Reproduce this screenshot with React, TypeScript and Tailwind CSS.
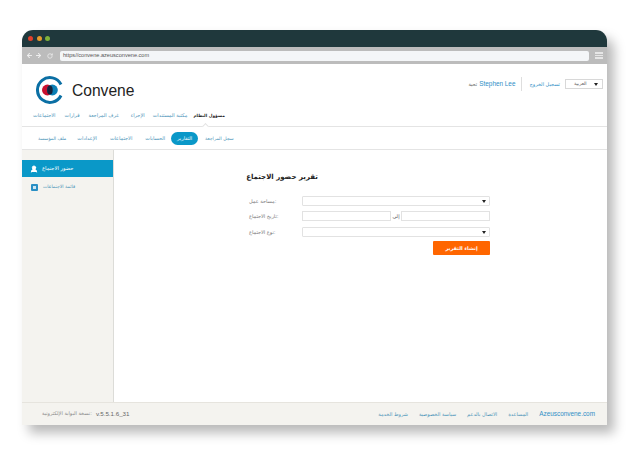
import { ArrowLeft, ArrowRight, RotateCw, UserRound } from 'lucide-react';

const font = { arabic: "font-['DejaVu_Sans','Noto_Sans',sans-serif]" };

const mainNav = [
  { label: 'الاجتماعات', className: 'mr-[9px]' },
  { label: 'قرارات', className: 'mr-[9px]' },
  { label: 'غرف المراجعة', className: 'mr-[12px]' },
  { label: 'الإجراء', className: 'mr-[8px]' },
  { label: 'مكتبة المستندات', className: 'mr-[6px]' },
];
const subNav = [
  { label: 'ملف المؤسسة', className: 'text-[4.6px] mt-[2px] mr-[11px]' },
  { label: 'الإعدادات', className: 'mr-[13px]' },
  { label: 'الاجتماعات', className: 'mr-[13px]' },
  { label: 'الحسابات', className: 'mr-[6px]' },
];
const footerLinks = ['شروط الخدمة', 'سياسة الخصوصية', 'الاتصال بالدعم', 'المساعدة'];

function Logo() {
  return (
    <svg width="28" height="28" viewBox="0 0 28 28" className="shrink-0">
      <path d="M25 8.5 A12.4 12.4 0 1 0 25 19.5" fill="none" stroke="#0b6fa4" strokeWidth="3" />
      <circle cx="11.4" cy="14" r="5.4" fill="#c8102e" />
      <circle cx="16.4" cy="14" r="5.4" fill="#0b7fb5" />
      <ellipse cx="13.9" cy="14" rx="2.8" ry="4.6" fill="#14233c" />
    </svg>
  );
}

function Caret() {
  return <span className="w-0 h-0 border-x-[2px] border-x-transparent border-t-[3px] border-t-[#222]" />;
}

function SelectBox() {
  return (
    <div className="h-[10px] w-full flex items-center justify-end pr-[3px] bg-white border border-[#e2e2e2] rounded-[1px]">
      <Caret />
    </div>
  );
}

function FormLabel({ text }: { text: string }) {
  return (
    <div className="w-[54px] text-[5px] leading-none text-[#777] shrink-0 pl-[1px]">
      <span dir="rtl" className="inline-block">{text}</span>
    </div>
  );
}

export default function App() {
  return (
    <div className={`w-[630px] h-[470px] bg-white pt-[30px] pl-[22px] overflow-hidden ${font.arabic}`}>
      <div className="w-[585px] h-[395px] flex flex-col bg-white rounded-t-[11px] shadow-[7px_8px_12px_rgba(0,0,0,0.28)]">
        {/* Browser chrome */}
        <div className="h-[17px] bg-[#1f383c] rounded-t-[11px] flex items-center gap-[3.5px] pl-[6px] shrink-0">
          <span className="w-[5px] h-[5px] rounded-full bg-[#e0402c]" />
          <span className="w-[5px] h-[5px] rounded-full bg-[#e59a2c]" />
          <span className="w-[5px] h-[5px] rounded-full bg-[#7fb23a]" />
        </div>
        <div className="h-[17px] bg-[#bcbcbc] flex items-center pl-[4px] pr-[4px] shrink-0">
          <div className="flex items-center gap-[2px] w-[34px] text-[#eeeeee]">
            <ArrowLeft size={7} strokeWidth={3.5} />
            <ArrowRight size={7} strokeWidth={3.5} />
            <RotateCw size={6} strokeWidth={3} className="ml-[3px]" />
          </div>
          <div className="w-[529px] h-[10px] bg-[#f4f6f8] rounded-[2px] flex items-center pl-[3px] text-[5.6px] leading-none text-[#555] font-['Liberation_Sans',sans-serif]">
            https//convene.azeusconvene.com
          </div>
          <div className="ml-[6px] w-[8px] flex flex-col gap-[1px]">
            <span className="h-[1.5px] bg-[#e6e6e6]" />
            <span className="h-[1.5px] bg-[#e6e6e6]" />
            <span className="h-[1.5px] bg-[#e6e6e6]" />
          </div>
        </div>

        {/* Header */}
        <header className="relative h-[63px] border-b border-[#e4e4e4] px-[11px] shrink-0">
          <div className="flex justify-between pt-[12px]">
            <div className="flex items-center gap-[8px] pl-[3px]">
              <Logo />
              <span className="text-[15.6px] leading-none text-[#222] mt-[2px] font-['Liberation_Sans',sans-serif]">Convene</span>
            </div>
            <div className="flex items-center h-[14px] mt-[1px] text-[5px] leading-none -mr-[7px]">
              <span className="text-[#666] mr-[2px]">تحية</span>
              <span className="text-[#2f8fc6] text-[6.4px] font-['Liberation_Sans',sans-serif]">Stephen Lee</span>
              <span className="w-px h-[14px] bg-[#dedede] ml-[6px] mr-[7px]" />
              <span className="text-[#2f8fc6] mr-[5px]">تسجيل الخروج</span>
              <div className="w-[38px] h-[10px] border border-[#d8d8d8] flex items-center justify-between pl-[8px] pr-[4px]">
                <span className="text-[#555] text-[4.6px]">العربية</span>
                <Caret />
              </div>
            </div>
          </div>
          <nav className="flex items-center mt-[8px] text-[5px] leading-none text-[#4a93b8]">
            {mainNav.map((item) => (
              <span key={item.label} dir="rtl" className={item.className}>{item.label}</span>
            ))}
            <span dir="rtl" className="text-[4.3px] mt-[2px] text-[#222] font-bold">مسؤول النظام</span>
          </nav>
          <span className="absolute left-[181px] -bottom-[3px] w-[5px] h-[5px] rotate-45 bg-white border-l border-t border-[#e4e4e4]" />
        </header>

        <nav className="h-[23px] border-b border-[#e4e4e4] flex items-center pl-[16px] text-[5px] leading-none text-[#4a93b8] shrink-0">
          {subNav.map((item) => (
            <span key={item.label} dir="rtl" className={item.className}>{item.label}</span>
          ))}
          <span dir="rtl" className="w-[27px] h-[13px] rounded-full bg-[#0a98c8] text-white flex items-center justify-center">التقارير</span>
          <span dir="rtl" className="ml-[7px] mt-[2px] text-[4.6px]">سجل المراجعة</span>
        </nav>

        {/* Body */}
        <div className="flex flex-1 min-h-0">
          <aside className="w-[92px] bg-[#f4f3ef] border-r border-[#dcdcd8] pt-[10px] shrink-0">
            <div className="h-[17px] bg-[#0a98c8] flex items-center pl-[8px] gap-[4px] text-white text-[5.2px] leading-none">
              <UserRound size={8} strokeWidth={3} fill="white" />
              <span dir="rtl">حضور الاجتماع</span>
            </div>
            <div className="flex items-center mt-[7px] pl-[9px] gap-[5px] text-[#4a93b8] text-[4.6px] leading-none">
              <span className="w-[7px] h-[7px] bg-[#2a8fc4] rounded-[1px] flex items-center justify-center">
                <span className="w-[3px] h-[3px] bg-[#cfe6f2]" />
              </span>
              <span dir="rtl">قائمة الاجتماعات</span>
            </div>
          </aside>
          <main className="flex-1 pl-[134px] pt-[24px]">
            <h1 className="text-[7px] leading-none font-bold text-[#222] mb-[15px]">
              <span dir="rtl" className="block w-[70px] text-right whitespace-nowrap">تقرير حضور الاجتماع</span>
            </h1>
            <div className="w-[242px] flex flex-col gap-[5px]">
              <div className="flex items-center">
                <FormLabel text=":مساحة عمل" />
                <SelectBox />
              </div>
              <div className="flex items-center">
                <FormLabel text=":تاريخ الاجتماع" />
                <div className="flex items-center w-full">
                  <div className="h-[10px] w-[89px] bg-white border border-[#e2e2e2]" />
                  <span className="w-[10px] text-center text-[5px] leading-none text-[#555]">إلى</span>
                  <div className="h-[10px] w-[89px] bg-white border border-[#e2e2e2]" />
                </div>
              </div>
              <div className="flex items-center mt-[1px]">
                <FormLabel text=":نوع الاجتماع" />
                <SelectBox />
              </div>
            </div>
            <div className="w-[242px] flex justify-end mt-[4px]">
              <button className="w-[57px] h-[14px] bg-[#ff6600] rounded-[1px] text-white text-[5px] leading-none font-bold">
                إنشاء التقرير
              </button>
            </div>
          </main>
        </div>

        {/* Footer */}
        <footer className="h-[23px] bg-[#f4f3ef] border-t border-[#e6e4de] flex items-center justify-between pl-[20px] pr-[12px] shrink-0">
          <div className="flex items-center gap-[4px] text-[5px] leading-none text-[#888]">
            <span>نسخة البوابة الإلكترونية:</span>
            <span className="text-[6.2px] text-[#666] font-['Liberation_Sans',sans-serif]">v.5.5.1.6_31</span>
          </div>
          <div className="flex items-center gap-[11px] text-[5px] leading-none text-[#4a93b8]">
            {footerLinks.map((item) => (
              <span key={item} dir="rtl">{item}</span>
            ))}
            <span className="text-[6.4px] text-[#2f8fc6] font-['Liberation_Sans',sans-serif]">Azeusconvene.com</span>
          </div>
        </footer>
      </div>
    </div>
  );
}
